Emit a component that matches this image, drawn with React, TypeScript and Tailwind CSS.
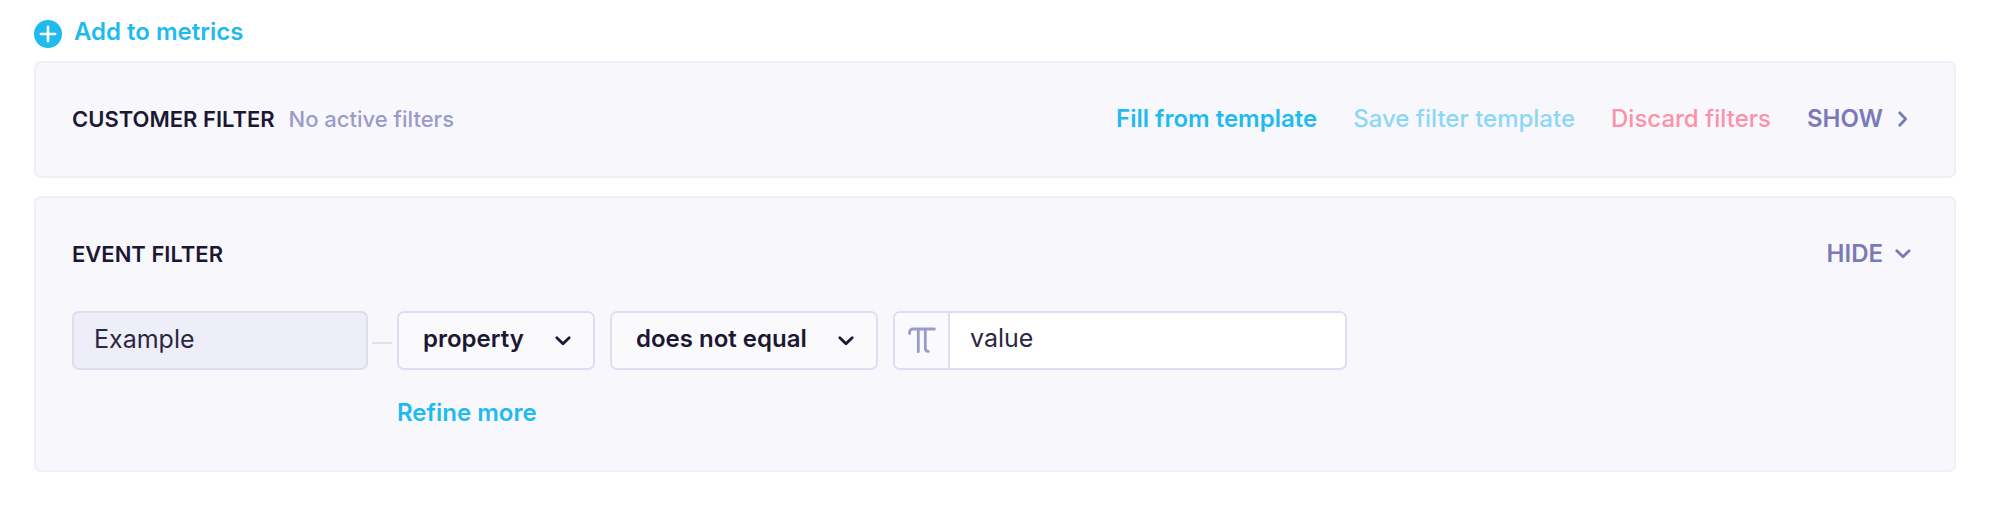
import React from "react";

/**
 * Props for a collapsible filter panel.
 *
 * @property title - Upper-case panel heading.
 * @property hint - Optional muted text beside the heading.
 * @property actions - Buttons aligned to the right edge of the header.
 */
interface FilterPanelProps {
  title: string;
  hint?: string;
  actions: React.ReactNode;
  children?: React.ReactNode;
}

const FilterPanel: React.FC<FilterPanelProps> = ({
  title,
  hint,
  actions,
  children,
}) => (
  <section className="rounded-[7px] border-2 border-[#efeff8] bg-[#f8f7fc] px-9 pt-10 pb-[41px]">
    <header className="flex items-center justify-between pr-[3px]">
      <div className="flex items-center gap-3.5 text-[22px] leading-8">
        <h2 className="font-semibold text-[#1c1733]">{title}</h2>
        {hint && <span className="font-medium text-[#9b9bc9]">{hint}</span>}
      </div>
      <div className="flex items-center gap-9 text-2xl leading-8 font-medium">
        {actions}
      </div>
    </header>
    {children}
  </section>
);

/** Small chevron, pointing down unless rotated by the caller. */
const Chevron: React.FC<{ className?: string }> = ({ className }) => (
  <svg
    viewBox="0 0 24 24"
    fill="none"
    stroke="currentColor"
    strokeWidth="2.8"
    strokeLinecap="round"
    strokeLinejoin="round"
    aria-hidden="true"
    className={`size-6 ${className ?? ""}`}
  >
    <path d="M5.8 8.7 12 14.7l6.2-6" />
  </svg>
);

interface DropdownProps {
  label: string;
  options: string[];
  className: string;
}

const Dropdown: React.FC<DropdownProps> = ({ label, options, className }) => (
  <div className={`relative ${className}`}>
    <select
      aria-label={label}
      className="h-[59px] w-full appearance-none rounded-[7px] border-2 border-[#dcdff1] bg-[#fafafd] pb-1 pl-6 text-2xl font-semibold text-[#1c1733]"
    >
      {options.map((option) => (
        <option key={option}>{option}</option>
      ))}
    </select>
    <Chevron className="pointer-events-none absolute top-[18px] right-5 text-[#1c1733]" />
  </div>
);

const App: React.FC = () => (
  <main className="bg-white pt-4 pr-[43px] pl-[34px] font-[Inter,sans-serif]">
    <button
      type="button"
      className="flex items-center gap-3 text-2xl leading-8 font-semibold text-[#1fbbf0]"
    >
      <svg viewBox="0 0 28 28" aria-hidden="true" className="mt-1 size-7">
        <circle cx="14" cy="14" r="14" fill="currentColor" />
        <path
          d="M14 6.8v14.4M6.8 14h14.4"
          stroke="#fff"
          strokeWidth="2.6"
          strokeLinecap="round"
        />
      </svg>
      Add to metrics
    </button>

    <div className="mt-[13px] flex flex-col gap-[18px]">
      <FilterPanel
        title="CUSTOMER FILTER"
        hint="No active filters"
        actions={
          <>
            <button type="button" className="font-semibold text-[#1fbbf0]">
              Fill from template
            </button>
            <button type="button" className="text-[#8bd7f7]">
              Save filter template
            </button>
            <button type="button" className="text-[#fb92a8]">
              Discard filters
            </button>
            <button
              type="button"
              className="flex items-center gap-2 font-semibold text-[#7a7ab8]"
            >
              SHOW
              <Chevron className="-rotate-90" />
            </button>
          </>
        }
      />

      <FilterPanel
        title="EVENT FILTER"
        actions={
          <button
            type="button"
            className="flex items-center gap-2 font-semibold text-[#7a7ab8]"
          >
            HIDE
            <Chevron />
          </button>
        }
      >
        <div className="mt-[41px] flex items-start">
          <input
            type="text"
            readOnly
            aria-label="Event"
            defaultValue="Example"
            className="h-[59px] w-[296px] rounded-[7px] border-2 border-[#dcdeeb] bg-[#edeef7] px-5 pb-1 text-[25px] text-[#2b2742]"
          />
          <div className="mt-[31px] mr-[5px] ml-1 h-0.5 w-5 bg-[#dfe0f2]" />
          <div>
            <div className="flex gap-[15px]">
              <Dropdown
                label="Property"
                options={["property"]}
                className="w-[198px]"
              />
              <Dropdown
                label="Operator"
                options={["does not equal", "equals"]}
                className="w-[268px]"
              />
              <div className="flex h-[59px] w-[454px] overflow-hidden rounded-[7px] border-2 border-[#dcdff1] bg-white">
                <button
                  type="button"
                  aria-label="Value type"
                  className="flex w-[55px] shrink-0 items-center justify-center border-r-2 border-[#dcdff1] bg-[#fafafd] text-[#9b9bc9]"
                >
                  <svg
                    viewBox="0 0 28 28"
                    fill="none"
                    stroke="currentColor"
                    strokeWidth="2.8"
                    strokeLinecap="round"
                    strokeLinejoin="round"
                    aria-hidden="true"
                    className="size-7"
                  >
                    <path d="M1.6 6.5V5.2A3.2 3.2 0 0 1 4.8 2H26.4M10.3 2v22.8M17.3 2v18.8c0 2.6 1 3.6 3 3.6" />
                  </svg>
                </button>
                <input
                  type="text"
                  aria-label="Value"
                  defaultValue="value"
                  className="min-w-0 flex-1 px-5 pb-1 text-[25px] text-[#2b2742]"
                />
              </div>
            </div>
            <button
              type="button"
              className="mt-[27px] block text-2xl leading-8 font-semibold text-[#1fbbf0]"
            >
              Refine more
            </button>
          </div>
        </div>
      </FilterPanel>
    </div>
  </main>
);

export default App;
